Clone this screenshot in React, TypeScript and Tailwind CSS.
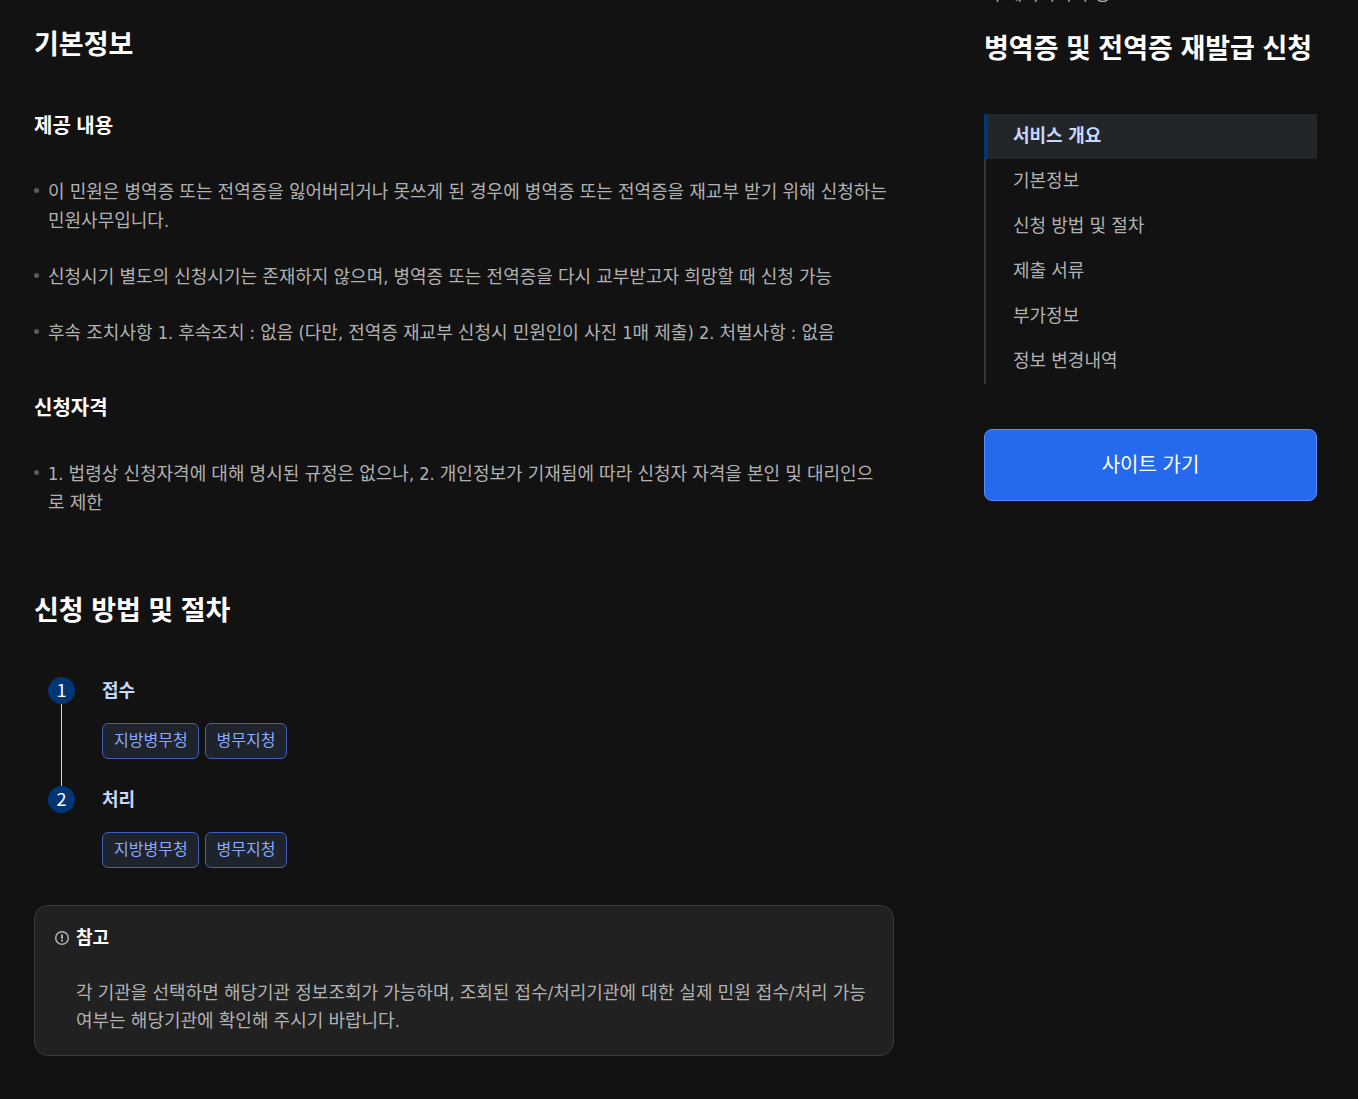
import React, { FC } from "react"

interface IStep {
	id: number
	title: string
	agencies: string[]
}

const NAV = [
	"서비스 개요",
	"기본정보",
	"신청 방법 및 절차",
	"제출 서류",
	"부가정보",
	"정보 변경내역",
]

const CONTENTS = [
	"이 민원은 병역증 또는 전역증을 잃어버리거나 못쓰게 된 경우에 병역증 또는 전역증을 재교부 받기 위해 신청하는 민원사무입니다.",
	"신청시기 별도의 신청시기는 존재하지 않으며, 병역증 또는 전역증을 다시 교부받고자 희망할 때 신청 가능",
	"후속 조치사항 1. 후속조치 : 없음 (다만, 전역증 재교부 신청시 민원인이 사진 1매 제출) 2. 처벌사항 : 없음",
]

const QUALIFICATIONS = [
	"1. 법령상 신청자격에 대해 명시된 규정은 없으나, 2. 개인정보가 기재됨에 따라 신청자 자격을 본인 및 대리인으로 제한",
]

const STEPS: IStep[] = [
	{ id: 1, title: "접수", agencies: ["지방병무청", "병무지청"] },
	{ id: 2, title: "처리", agencies: ["지방병무청", "병무지청"] },
]

const H2 =
	"font-['Liberation_Sans','Noto_Sans_CJK_KR',sans-serif] text-[27px] leading-10 font-bold text-white"
const H3 =
	"mt-[45px] font-['Liberation_Sans','Noto_Sans_CJK_KR',sans-serif] text-xl leading-8 font-bold text-white"

const BulletList: FC<{ items: string[] }> = ({ items }) => (
	<ul className="mt-[35px] flex flex-col gap-[27px] pr-[5px]">
		{items.map((e, i) => (
			<li key={i} className="flex gap-[9px]">
				<span className="mt-[11px] size-[5px] shrink-0 rounded-full bg-[#5c5c5c]" />
				<span>{e}</span>
			</li>
		))}
	</ul>
)

const InfoIcon: FC = () => (
	<svg
		viewBox="0 0 16 16"
		className="size-4 shrink-0"
		fill="none"
		stroke="#b1b1b1"
		aria-hidden="true"
	>
		<circle cx="8" cy="8" r="6.3" strokeWidth="1.5" />
		<path d="M8 4.4v4.4" strokeWidth="2" />
		<path d="M8 9.8v1.8" strokeWidth="2" />
	</svg>
)

const App: FC = () => {
	return (
		<div className="flex min-h-screen items-start justify-between gap-[90px] bg-[#121212] pr-[41px] pl-[34px] font-['DejaVu_Sans_Condensed','Noto_Sans_CJK_KR',sans-serif] text-lg leading-[29px] text-[#b1b1b1]">
			<main className="min-w-0 flex-1 pt-[25px] pb-11">
				<section>
					<h2 className={H2}>기본정보</h2>
					<h3 className={H3}>제공 내용</h3>
					<BulletList items={CONTENTS} />
					<h3 className={H3}>신청자격</h3>
					<BulletList items={QUALIFICATIONS} />
				</section>

				<section className="mt-[74px]">
					<h2 className={H2}>신청 방법 및 절차</h2>
					<ol className="mt-[46px] ml-[14px]">
						{STEPS.map((step, i) => (
							<li key={step.id} className="flex gap-[27px]">
								<div className="flex w-[27px] flex-col items-center">
									<span className="flex size-[27px] items-center justify-center rounded-full bg-[#003675] pb-[3px] font-['Noto_Sans_CJK_KR',sans-serif] text-white">
										{step.id}
									</span>
									{i < STEPS.length - 1 && (
										<span className="w-px flex-1 bg-[#cdd1d5]" />
									)}
								</div>
								<div className={i < STEPS.length - 1 ? "pb-[27px]" : ""}>
									<h4 className="leading-[27px] font-bold text-[#c6d8ff]">
										{step.title}
									</h4>
									<div className="mt-[19px] flex gap-[6px]">
										{step.agencies.map((name) => (
											<button
												key={name}
												type="button"
												className="h-9 cursor-pointer rounded-md border border-[#3f60b5] bg-[#1f242c] pr-[10px] pl-[11px] text-base leading-[34px] text-[#8aa8ff]"
											>
												{name}
											</button>
										))}
									</div>
								</div>
							</li>
						))}
					</ol>

					<div className="mt-[37px] rounded-[14px] border border-[#3c3c3c] bg-[#212121] px-[19px] pt-[17px] pb-5">
						<div className="flex items-center gap-[6px]">
							<InfoIcon />
							<strong className="font-bold text-white">참고</strong>
						</div>
						<p className="mt-[27px] pl-[22px] leading-7">
							각 기관을 선택하면 해당기관 정보조회가 가능하며, 조회된
							접수/처리기관에 대한 실제 민원 접수/처리 가능 여부는 해당기관에
							확인해 주시기 바랍니다.
						</p>
					</div>
				</section>
			</main>

			<aside className="w-[333px] shrink-0">
				<div className="flex h-2 items-end">
					<span>이 페이지의 구성</span>
				</div>
				<h1 className="mt-[21px] font-['Liberation_Sans','Noto_Sans_CJK_KR',sans-serif] text-[27px] leading-10 font-bold whitespace-nowrap text-white">
					병역증 및 전역증 재발급 신청
				</h1>
				<nav className="mt-[45px]">
					<ul>
						{NAV.map((name, i) => (
							<li key={name}>
								<a
									href="#"
									className={
										i === 0
											? "block h-[45px] border-l-4 border-[#003675] bg-[#232629] pl-[25px] leading-[43px] font-bold text-[#c6d8ff]"
											: "block h-[45px] border-l-2 border-[#33363a] pl-[27px] leading-[43px]"
									}
								>
									{name}
								</a>
							</li>
						))}
					</ul>
				</nav>
				<button
					type="button"
					className="mt-[45px] h-[72px] w-full cursor-pointer rounded-lg border border-[#5c8bff] bg-[#256aed] text-xl text-white"
				>
					사이트 가기
				</button>
			</aside>
		</div>
	)
}

export default App
